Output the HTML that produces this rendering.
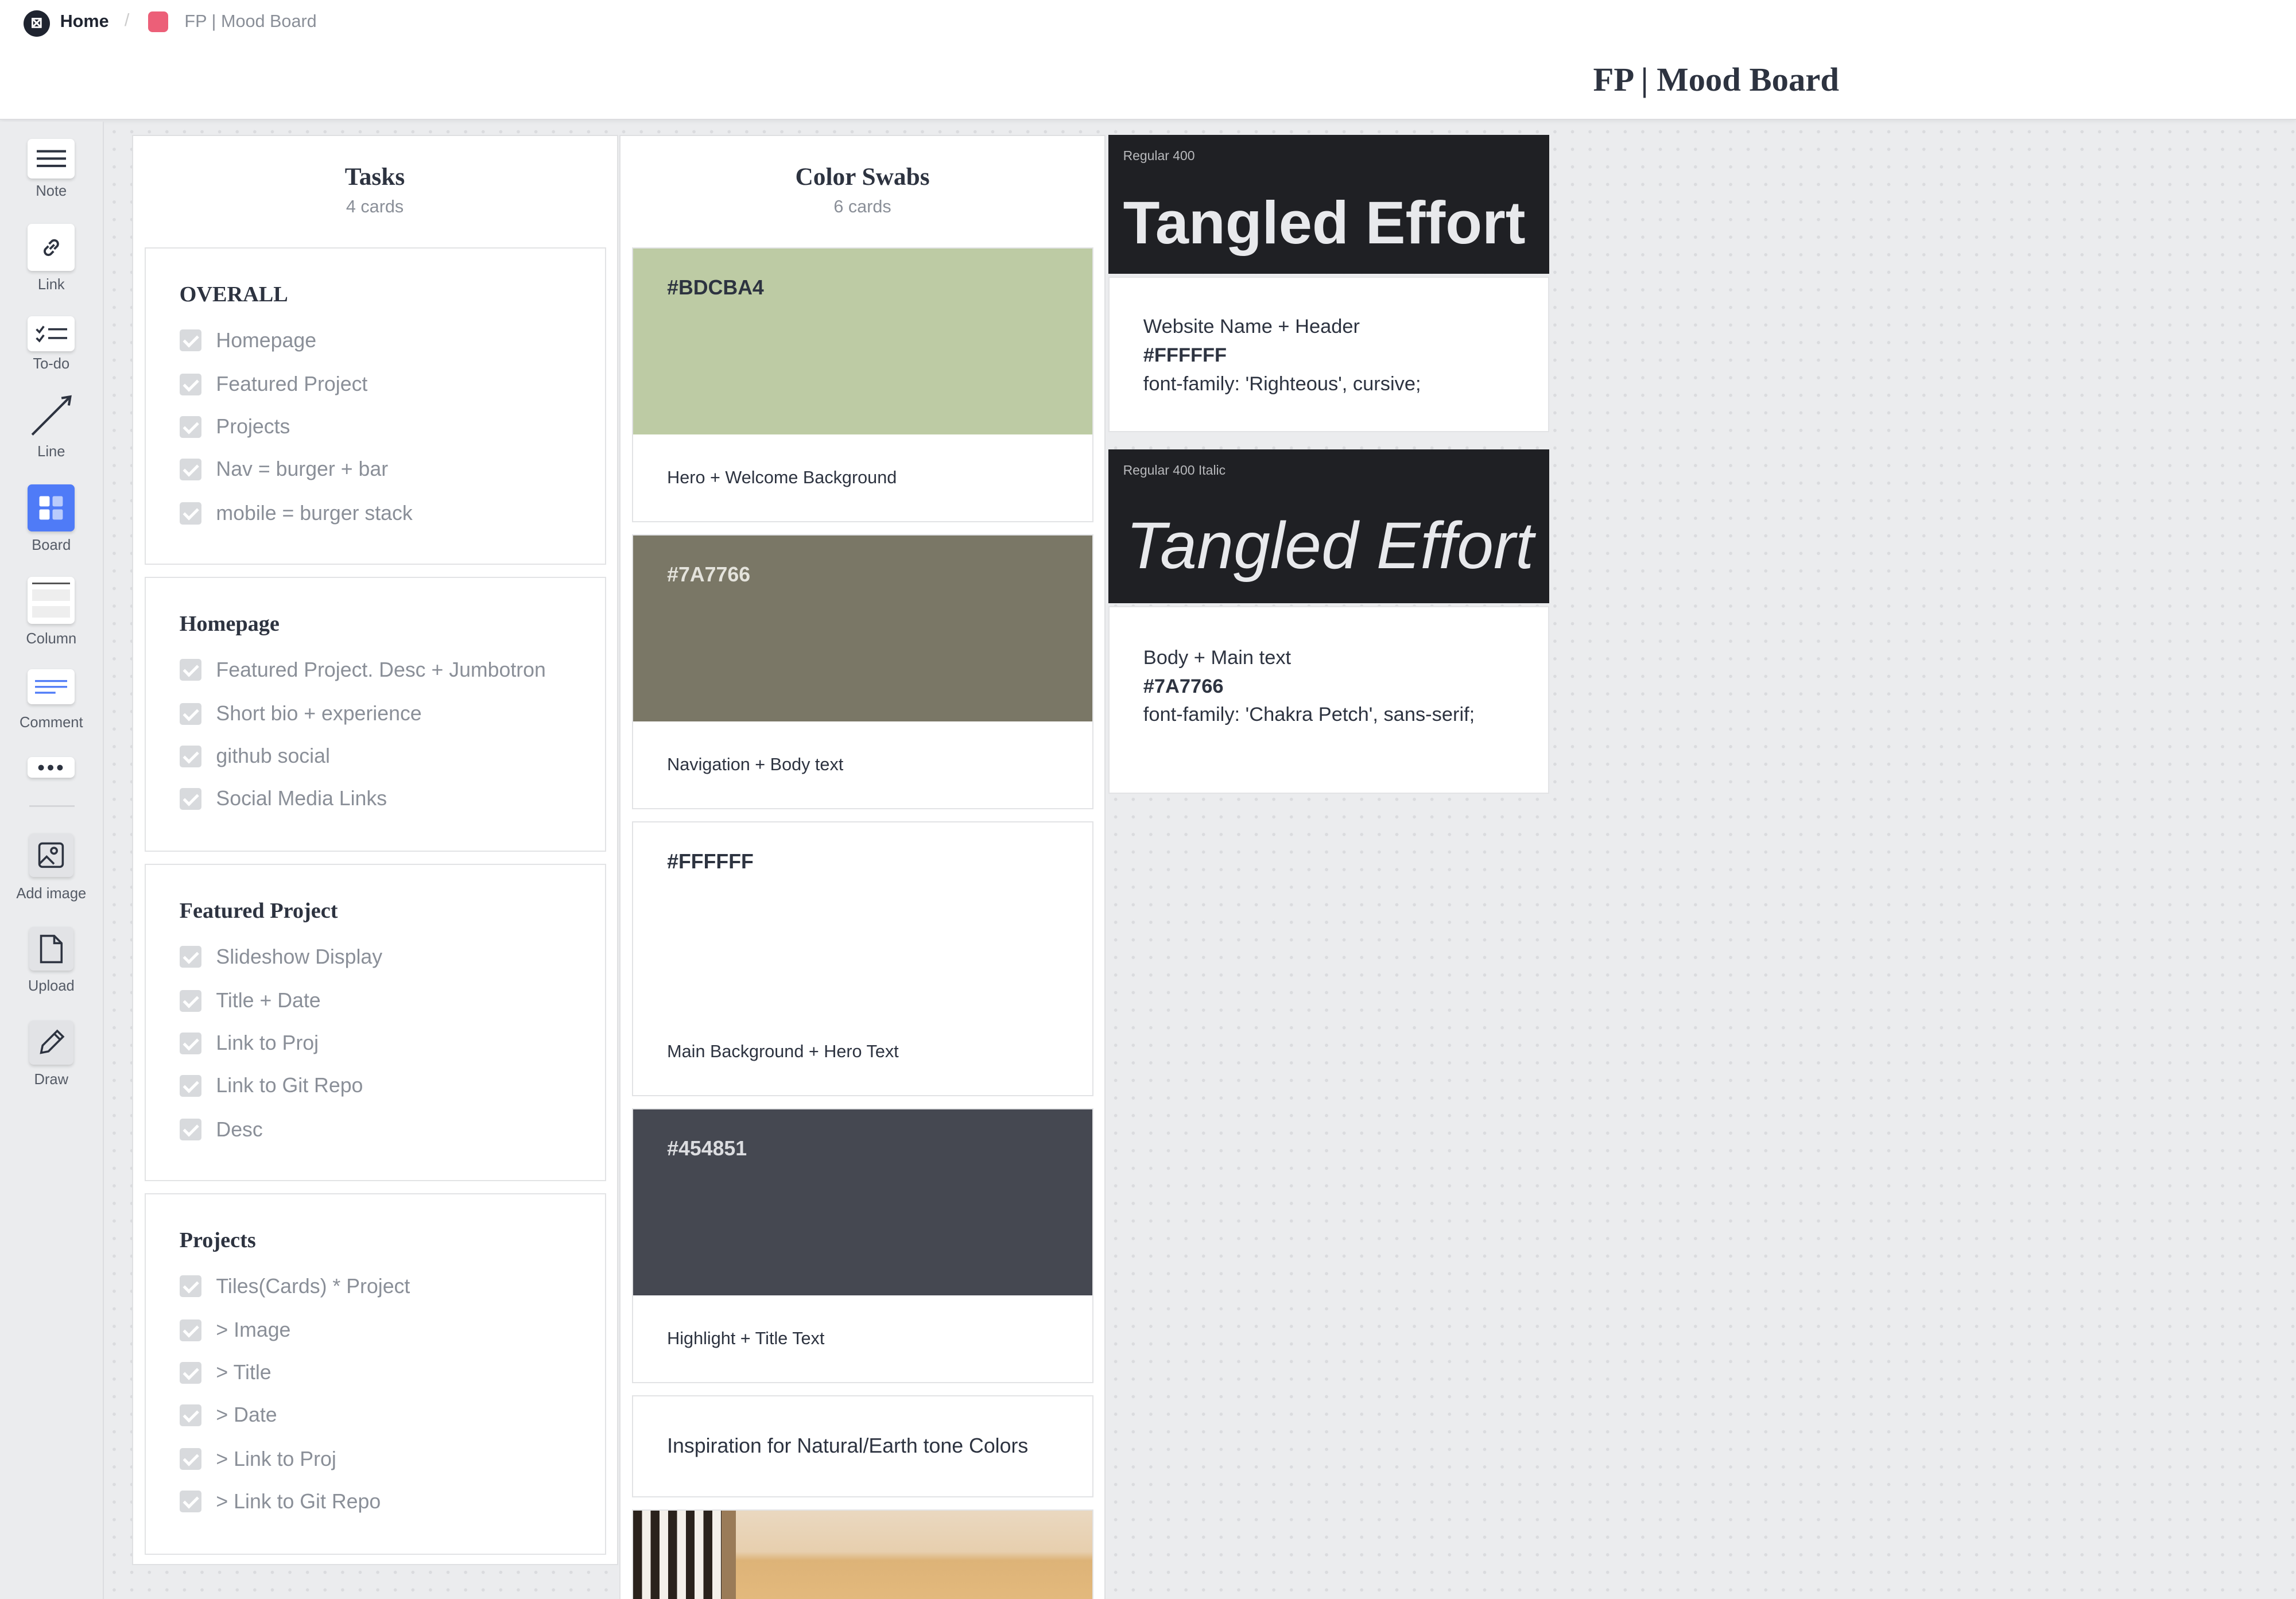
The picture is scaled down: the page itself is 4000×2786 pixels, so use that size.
<!DOCTYPE html>
<html><head><meta charset="utf-8"><style>
*{box-sizing:border-box;margin:0;padding:0}
html,body{width:4000px;height:2786px;overflow:hidden;background:#ebecee}
#root{zoom:2.551;width:1568px;height:1092px;position:relative;font-family:"Liberation Sans",sans-serif;color:#2d3340;
background-color:#ebecee;background-image:radial-gradient(#dadbde 1px,transparent 1.2px);background-size:12px 12px;overflow:hidden}
.abs{position:absolute}
#hdr{left:0;top:0;width:1568px;height:82px;background:#fff;border-bottom:1px solid #dcdde0;box-shadow:0 1px 3px rgba(0,0,0,.06)}
#side{left:0;top:83px;width:71px;height:1009px;background:#ebecee;border-right:1px solid #dcdde0}
.tool{position:absolute;left:19px;width:32px;height:32px;background:#fff;border-radius:3px;box-shadow:0 1px 2px rgba(0,0,0,.15);display:flex;align-items:center;justify-content:center}
.tl{position:absolute;left:0;width:70px;text-align:center;font-size:10px;color:#555b66}
.col{position:absolute;background:#fff;border:1px solid #dfe0e2}
.ct{text-align:center;font-family:"Liberation Serif",serif;font-weight:bold;font-size:17px;color:#2d3340}
.cs{text-align:center;font-size:12px;color:#8a8f98;margin-top:4px}
.card{position:absolute;background:#fff;border:1px solid #e2e3e5}
.h{font-family:"Liberation Serif",serif;font-weight:bold;font-size:15px;color:#2d3340;position:absolute;left:23px}
.it{position:absolute;left:23px;font-size:14px;color:#8a8f98;display:flex;align-items:center}
.cb{width:15px;height:15px;background:#d8dadd;border-radius:2px;margin-right:10px;position:relative}
.cb:after{content:"";position:absolute;left:5px;top:2px;width:4px;height:8px;border:solid #fff;border-width:0 2px 2px 0;transform:rotate(45deg)}
.sw{position:absolute;left:0;top:0;width:100%;height:127px;font-weight:bold;font-size:14px;padding:19px 23px}
.lab{position:absolute;left:23px;font-size:12px;color:#2d3340}
.dk{position:absolute;background:#1f2024;color:#e8e9ec}
.small{font-size:9px;color:#b8b9bc;position:absolute;left:10px;top:9px}
.big{position:absolute;left:10px;color:#e8e9ec;white-space:nowrap}
.ftxt{position:absolute;left:23px;font-size:13.5px;line-height:19.5px;color:#2d3340}
</style></head><body><div id="root">
<div id="hdr" class="abs">
 <div class="abs" style="left:16px;top:7px;width:18px;height:18px;border-radius:50%;background:#1f2430;color:#fff;font-size:10px;text-align:center;line-height:18px;font-weight:bold">⊠</div>
 <div class="abs" style="left:41px;top:8px;font-size:12px;font-weight:bold;color:#1f2430">Home</div>
 <div class="abs" style="left:85px;top:7px;font-size:12px;color:#ccc">/</div>
 <div class="abs" style="left:101px;top:8px;width:14px;height:14px;border-radius:3px;background:#ec5f78"></div>
 <div class="abs" style="left:126px;top:8px;font-size:12px;color:#8a8f98">FP | Mood Board</div>
 <div class="abs" style="left:1000px;width:344px;top:41px;text-align:center;font-family:'Liberation Serif',serif;font-weight:bold;font-size:23px;color:#2d3340">FP | Mood Board</div>
</div>
<div id="side" class="abs">
 <div class="tool" style="top:12px;height:27px"><svg width="20" height="12"><path d="M0 1h20M0 6h20M0 11h20" stroke="#2d3340" stroke-width="1.6"/></svg></div><div class="tl" style="top:42px">Note</div>
 <div class="tool" style="top:70px"><svg width="16" height="16" viewBox="0 0 16 16" fill="none" stroke="#2d3340" stroke-width="1.5"><path d="M7 9l3-3M6 7l-2 2a2.5 2.5 0 003.5 3.5l2-2M10 9l2-2A2.5 2.5 0 008.5 3.5l-2 2"/></svg></div><div class="tl" style="top:106px">Link</div>
 <div class="tool" style="top:133px;height:24px"><svg width="22" height="12"><path d="M1 3l2 2 3-4M1 9l2 2 3-4M9 3h13M9 9h13" stroke="#2d3340" stroke-width="1.4" fill="none"/></svg></div><div class="tl" style="top:160px">To-do</div>
 <svg class="abs" style="left:20px;top:186px" width="30" height="30"><path d="M2 28L28 2M22 3l6-1-1 6" stroke="#2d3340" stroke-width="1.6" fill="none"/></svg><div class="tl" style="top:220px">Line</div>
 <div class="tool" style="top:248px;background:#4f7bf7"><svg width="18" height="18"><rect x="1" y="1" width="7" height="7" rx="1" fill="#fff"/><rect x="10" y="1" width="7" height="7" rx="1" fill="#b9cbfc"/><rect x="1" y="10" width="7" height="7" rx="1" fill="#fff"/><rect x="10" y="10" width="7" height="7" rx="1" fill="#b9cbfc"/></svg></div><div class="tl" style="top:284px">Board</div>
 <div class="tool" style="top:311px;height:32px;flex-direction:column;justify-content:space-between;padding:4px 0"><div style="width:26px;height:1px;background:#555"></div><div style="width:26px;height:8px;background:#eee"></div><div style="width:26px;height:8px;background:#eee"></div></div><div class="tl" style="top:348px">Column</div>
 <div class="tool" style="top:374px;height:24px"><svg width="22" height="10"><path d="M0 1h22M0 5h22M0 9h14" stroke="#4f7bf7" stroke-width="1.3"/></svg></div><div class="tl" style="top:405px">Comment</div>
 <div class="tool" style="top:434px;height:14px;font-size:9px;letter-spacing:1px;color:#2d3340">●●●</div>
 <div class="abs" style="left:20px;top:467px;width:31px;height:1px;background:#d5d6d9"></div>
 <div class="tool" style="top:486px;width:30px;height:30px;left:20px;background:#e2e3e6"><svg width="18" height="18" fill="none" stroke="#2d3340" stroke-width="1.4"><rect x="1" y="1" width="16" height="16" rx="2"/><circle cx="11" cy="6" r="2"/><path d="M1 15l5-5 5 5"/></svg></div><div class="tl" style="top:522px">Add image</div>
 <div class="tool" style="top:550px;width:30px;height:30px;left:20px;background:#e2e3e6"><svg width="16" height="20" fill="none" stroke="#2d3340" stroke-width="1.4"><path d="M1 1h9l5 5v13H1zM10 1v5h5"/></svg></div><div class="tl" style="top:585px">Upload</div>
 <div class="tool" style="top:614px;width:30px;height:30px;left:20px;background:#e2e3e6"><svg width="20" height="20" fill="none" stroke="#2d3340" stroke-width="1.4"><path d="M3 17l1-5L14 2l4 4L8 16zM12 4l4 4"/></svg></div><div class="tl" style="top:649px">Draw</div>
</div>

<div class="col" style="left:90px;top:92px;width:332px;height:977px">
 <div style="padding-top:18px" class="ct">Tasks</div><div class="cs">4 cards</div>
 <div class="card" style="left:8px;top:76px;width:315px;height:217px">
  <div class="h" style="top:23px">OVERALL</div>
  <div class="it" style="top:55px"><span class="cb"></span>Homepage</div>
  <div class="it" style="top:85px"><span class="cb"></span>Featured Project</div>
  <div class="it" style="top:114px"><span class="cb"></span>Projects</div>
  <div class="it" style="top:143px"><span class="cb"></span>Nav = burger + bar</div>
  <div class="it" style="top:173px"><span class="cb"></span>mobile = burger stack</div>
 </div>
 <div class="card" style="left:8px;top:301px;width:315px;height:188px">
  <div class="h" style="top:23px">Homepage</div>
  <div class="it" style="top:55px"><span class="cb"></span>Featured Project. Desc + Jumbotron</div>
  <div class="it" style="top:85px"><span class="cb"></span>Short bio + experience</div>
  <div class="it" style="top:114px"><span class="cb"></span>github social</div>
  <div class="it" style="top:143px"><span class="cb"></span>Social Media Links</div>
 </div>
 <div class="card" style="left:8px;top:497px;width:315px;height:217px">
  <div class="h" style="top:23px">Featured Project</div>
  <div class="it" style="top:55px"><span class="cb"></span>Slideshow Display</div>
  <div class="it" style="top:85px"><span class="cb"></span>Title + Date</div>
  <div class="it" style="top:114px"><span class="cb"></span>Link to Proj</div>
  <div class="it" style="top:143px"><span class="cb"></span>Link to Git Repo</div>
  <div class="it" style="top:173px"><span class="cb"></span>Desc</div>
 </div>
 <div class="card" style="left:8px;top:722px;width:315px;height:247px">
  <div class="h" style="top:23px">Projects</div>
  <div class="it" style="top:55px"><span class="cb"></span>Tiles(Cards) * Project</div>
  <div class="it" style="top:85px"><span class="cb"></span>&gt; Image</div>
  <div class="it" style="top:114px"><span class="cb"></span>&gt; Title</div>
  <div class="it" style="top:143px"><span class="cb"></span>&gt; Date</div>
  <div class="it" style="top:173px"><span class="cb"></span>&gt; Link to Proj</div>
  <div class="it" style="top:202px"><span class="cb"></span>&gt; Link to Git Repo</div>
 </div>
</div>

<div class="col" style="left:423px;top:92px;width:332px;height:1010px">
 <div style="padding-top:18px" class="ct">Color Swabs</div><div class="cs">6 cards</div>
 <div class="card" style="left:8px;top:76px;width:315px;height:188px"><div class="sw" style="background:#bdcba4;color:#2d3340">#BDCBA4</div><div class="lab" style="top:150px">Hero + Welcome Background</div></div>
 <div class="card" style="left:8px;top:272px;width:315px;height:188px"><div class="sw" style="background:#7a7766;color:#e4e3dc">#7A7766</div><div class="lab" style="top:150px">Navigation + Body text</div></div>
 <div class="card" style="left:8px;top:468px;width:315px;height:188px"><div class="sw" style="background:#fff;color:#2d3340">#FFFFFF</div><div class="lab" style="top:150px">Main Background + Hero Text</div></div>
 <div class="card" style="left:8px;top:664px;width:315px;height:188px"><div class="sw" style="background:#454851;color:#dcdde0">#454851</div><div class="lab" style="top:150px">Highlight + Title Text</div></div>
 <div class="card" style="left:8px;top:860px;width:315px;height:70px"><div class="lab" style="top:26px;font-size:14px">Inspiration for Natural/Earth tone Colors</div></div>
 <div class="card" style="left:8px;top:938px;width:315px;height:80px;overflow:hidden;background:linear-gradient(180deg,#ead8c0 0,#e7cfae 28px,#ddb378 34px,#e3b97c 60px,#d8a865 80px)">
  <div class="abs" style="left:0;top:0;width:60px;height:80px;background:repeating-linear-gradient(90deg,#2a221c 0 6px,#f4f0ea 6px 12px)"></div>
  <div class="abs" style="left:60px;top:0;width:10px;height:80px;background:#9a7b58"></div>
 </div>
</div>

<div class="dk" style="left:757px;top:92px;width:301px;height:95px"><div class="small">Regular 400</div><div class="big" style="top:37px;font-weight:bold;font-size:41px;letter-spacing:0px">Tangled Effort</div></div>
<div class="card" style="left:757px;top:189px;width:301px;height:106px"><div class="ftxt" style="top:24px">Website Name + Header<br><b>#FFFFFF</b><br>font-family: 'Righteous', cursive;</div></div>
<div class="dk" style="left:757px;top:307px;width:301px;height:105px"><div class="small">Regular 400 Italic</div><div class="big" style="top:40px;font-style:italic;font-size:45px;left:12px">Tangled Effort</div></div>
<div class="card" style="left:757px;top:414px;width:301px;height:128px"><div class="ftxt" style="top:25px">Body + Main text<br><b>#7A7766</b><br>font-family: 'Chakra Petch', sans-serif;</div></div>
</div></body></html>
